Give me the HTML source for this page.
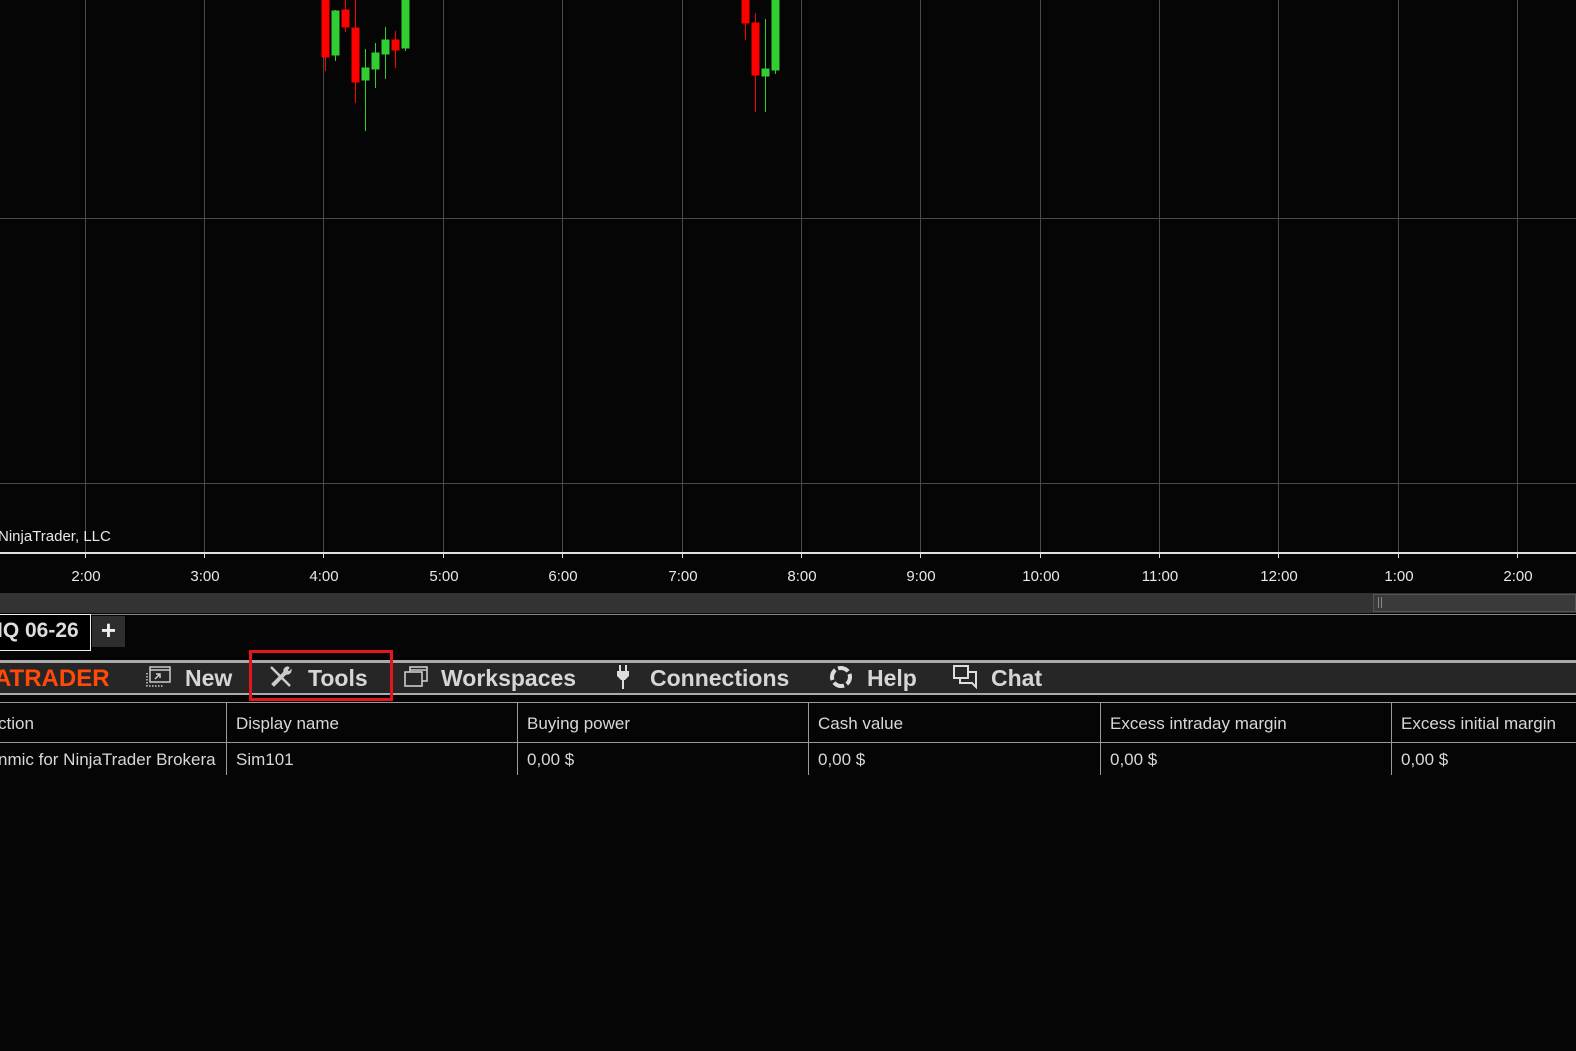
<!DOCTYPE html>
<html><head><meta charset="utf-8"><style>
*{margin:0;padding:0;box-sizing:border-box}
body{width:1576px;height:1051px;background:#050505;position:relative;overflow:hidden;font-family:"Liberation Sans",Arial,sans-serif;color:#ddd}
.a{position:absolute}
.vl{position:absolute;top:0;width:1px;height:552px;background:#4a4a4a}
.hl{position:absolute;left:0;width:1576px;height:1px;background:#4a4a4a}
.tk{position:absolute;top:552px;width:1px;height:6px;background:#ddd}
.lb{position:absolute;top:568px;font-size:15px;color:#e8e8e8;transform:translateX(-50%)}
.m{position:absolute;top:665px;font-weight:bold;font-size:23px;color:#d6d6d6}
.th,.td{position:absolute;font-size:17px;color:#d8d8d8}
.col{position:absolute;top:703px;width:1px;height:72px;background:#9a9a9a}
</style></head><body>
<div class="hl" style="top:218px"></div>
<div class="hl" style="top:483px"></div>
<div class="vl" style="left:85px"></div><div class="vl" style="left:204px"></div><div class="vl" style="left:323px"></div><div class="vl" style="left:443px"></div><div class="vl" style="left:562px"></div><div class="vl" style="left:682px"></div><div class="vl" style="left:801px"></div><div class="vl" style="left:920px"></div><div class="vl" style="left:1040px"></div><div class="vl" style="left:1159px"></div><div class="vl" style="left:1278px"></div><div class="vl" style="left:1398px"></div><div class="vl" style="left:1517px"></div>
<svg class="a" style="left:0;top:0" width="1576" height="552">
<g fill="#ff0000" stroke="#ff0000" stroke-width="1">
<line x1="325.5" y1="0" x2="325.5" y2="71"/><rect x="322" y="0" width="7" height="57"/>
<line x1="345.5" y1="0" x2="345.5" y2="32"/><rect x="342" y="10" width="7" height="17"/>
<line x1="355.5" y1="0" x2="355.5" y2="103"/><rect x="352" y="28" width="7" height="54"/>
<line x1="395.5" y1="31" x2="395.5" y2="68"/><rect x="392" y="40" width="7" height="10"/>
<line x1="745.5" y1="0" x2="745.5" y2="40"/><rect x="742" y="0" width="7" height="23"/>
<line x1="755.5" y1="13" x2="755.5" y2="112"/><rect x="752" y="23" width="7" height="52"/>
</g>
<g fill="#32cd32" stroke="#32cd32" stroke-width="1">
<line x1="335.5" y1="10" x2="335.5" y2="61"/><rect x="332" y="11" width="7" height="44"/>
<line x1="365.5" y1="49" x2="365.5" y2="131"/><rect x="362" y="68" width="7" height="12"/>
<line x1="375.5" y1="43" x2="375.5" y2="88"/><rect x="372" y="53" width="7" height="16"/>
<line x1="385.5" y1="27" x2="385.5" y2="79"/><rect x="382" y="40" width="7" height="14"/>
<line x1="405.5" y1="0" x2="405.5" y2="51"/><rect x="402" y="0" width="7" height="48"/>
<line x1="765.5" y1="19" x2="765.5" y2="112"/><rect x="762" y="69" width="7" height="7"/>
<line x1="775.5" y1="0" x2="775.5" y2="74"/><rect x="772" y="0" width="7" height="70"/>
</g></svg>
<div class="a" style="left:-2px;top:528px;font-size:15px;color:#e8e8e8">NinjaTrader, LLC</div>
<div class="a" style="left:0;top:552px;width:1576px;height:2px;background:#e0e0e0"></div>
<div class="tk" style="left:85px"></div><div class="tk" style="left:204px"></div><div class="tk" style="left:323px"></div><div class="tk" style="left:443px"></div><div class="tk" style="left:562px"></div><div class="tk" style="left:682px"></div><div class="tk" style="left:801px"></div><div class="tk" style="left:920px"></div><div class="tk" style="left:1040px"></div><div class="tk" style="left:1159px"></div><div class="tk" style="left:1278px"></div><div class="tk" style="left:1398px"></div><div class="tk" style="left:1517px"></div>
<div class="lb" style="left:86px">2:00</div><div class="lb" style="left:205px">3:00</div><div class="lb" style="left:324px">4:00</div><div class="lb" style="left:444px">5:00</div><div class="lb" style="left:563px">6:00</div><div class="lb" style="left:683px">7:00</div><div class="lb" style="left:802px">8:00</div><div class="lb" style="left:921px">9:00</div><div class="lb" style="left:1041px">10:00</div><div class="lb" style="left:1160px">11:00</div><div class="lb" style="left:1279px">12:00</div><div class="lb" style="left:1399px">1:00</div><div class="lb" style="left:1518px">2:00</div>
<div class="a" style="left:0;top:593px;width:1576px;height:20px;background:#333"></div>
<div class="a" style="left:1373px;top:594px;width:203px;height:18px;background:#3a3a3a;border:1px solid #555"></div>
<div class="a" style="left:1378px;top:597px;width:1px;height:11px;background:#888"></div><div class="a" style="left:1381px;top:597px;width:1px;height:11px;background:#888"></div>
<div class="a" style="left:0;top:614px;width:1576px;height:1px;background:#888"></div>
<div class="a" style="left:-2px;top:614px;width:93px;height:37px;border:1px solid #eee;background:#000"></div>
<div class="a" style="left:-3px;top:619px;font-weight:bold;font-size:21px;color:#ddd">IQ 06-26</div>
<div class="a" style="left:92px;top:616px;width:33px;height:31px;background:#2e2e2e;color:#eee;font-size:26px;font-weight:bold;text-align:center;line-height:28px">+</div>
<div class="a" style="left:0;top:660px;width:1576px;height:3px;background:#aaa"></div>
<div class="a" style="left:0;top:663px;width:1576px;height:30px;background:#262626"></div>
<div class="a" style="left:0;top:693px;width:1576px;height:2px;background:#aaa"></div>
<div class="m" style="left:-6px;color:#ff4a0a;font-size:24px">ATRADER</div>
<svg class="a" style="left:146px;top:665px" width="26" height="24" viewBox="0 0 26 24" fill="none" stroke="#ccc" stroke-width="1.5"><rect x="4" y="2" width="20" height="15"/><line x1="4" y1="5" x2="24" y2="5"/><path d="M1 8v13h17" stroke-dasharray="1.5 1.5"/><path d="M9 14l5-5M10 9h4v4"/></svg>
<div class="m" style="left:185px">New</div>
<svg class="a" style="left:268px;top:664px" width="26" height="26" viewBox="0 0 26 26" fill="none" stroke="#ccc" stroke-width="2.5"><line x1="3" y1="3" x2="22" y2="22"/><path d="M20 3a4 4 0 0 0-4 5L4 20l2 2 12-12a4 4 0 0 0 5-4l-2 2-2-2 2-2z" fill="#ccc" stroke-width="1.2"/></svg>
<div class="m" style="left:308px">Tools</div>
<div class="a" style="left:249px;top:650px;width:144px;height:51px;border:3px solid #e3161b"></div>
<svg class="a" style="left:403px;top:665px" width="26" height="24" viewBox="0 0 26 24" fill="none" stroke="#ccc" stroke-width="1.6"><rect x="7" y="2" width="17" height="14"/><line x1="7" y1="5" x2="24" y2="5"/><rect x="2" y="7" width="17" height="14" fill="#262626"/></svg>
<div class="m" style="left:441px">Workspaces</div>
<svg class="a" style="left:614px;top:663px" width="20" height="28" viewBox="0 0 20 28" fill="#ddd"><rect x="5" y="2" width="2" height="6"/><rect x="11" y="2" width="2" height="6"/><path d="M3 8h12v5l-4 4H7l-4-4z"/><rect x="8" y="17" width="2" height="9"/></svg>
<div class="m" style="left:650px">Connections</div>
<svg class="a" style="left:828px;top:664px" width="26" height="26" viewBox="0 0 26 26" fill="none" stroke="#ddd" stroke-width="4"><circle cx="13" cy="13" r="9" stroke-dasharray="11 3.1" transform="rotate(-20 13 13)"/></svg>
<div class="m" style="left:867px">Help</div>
<svg class="a" style="left:952px;top:664px" width="26" height="26" viewBox="0 0 26 26" fill="none" stroke="#ddd" stroke-width="2"><path d="M2 2h14v12H2z"/><path d="M8 14v5h12l4 4V8h-8"/></svg>
<div class="m" style="left:991px">Chat</div>
<div class="a" style="left:0;top:702px;width:1576px;height:1px;background:#9a9a9a"></div>
<div class="a" style="left:0;top:742px;width:1576px;height:1px;background:#9a9a9a"></div>
<div class="col" style="left:226px"></div><div class="col" style="left:517px"></div><div class="col" style="left:808px"></div><div class="col" style="left:1100px"></div><div class="col" style="left:1391px"></div>
<div class="th" style="left:-2px;top:714px">ction</div>
<div class="th" style="left:236px;top:714px">Display name</div>
<div class="th" style="left:527px;top:714px">Buying power</div>
<div class="th" style="left:818px;top:714px">Cash value</div>
<div class="th" style="left:1110px;top:714px">Excess intraday margin</div>
<div class="th" style="left:1401px;top:714px">Excess initial margin</div>
<div class="td" style="left:-2px;top:750px">nmic for NinjaTrader Brokera</div>
<div class="td" style="left:236px;top:750px">Sim101</div>
<div class="td" style="left:527px;top:750px">0,00 $</div>
<div class="td" style="left:818px;top:750px">0,00 $</div>
<div class="td" style="left:1110px;top:750px">0,00 $</div>
<div class="td" style="left:1401px;top:750px">0,00 $</div>
</body></html>
